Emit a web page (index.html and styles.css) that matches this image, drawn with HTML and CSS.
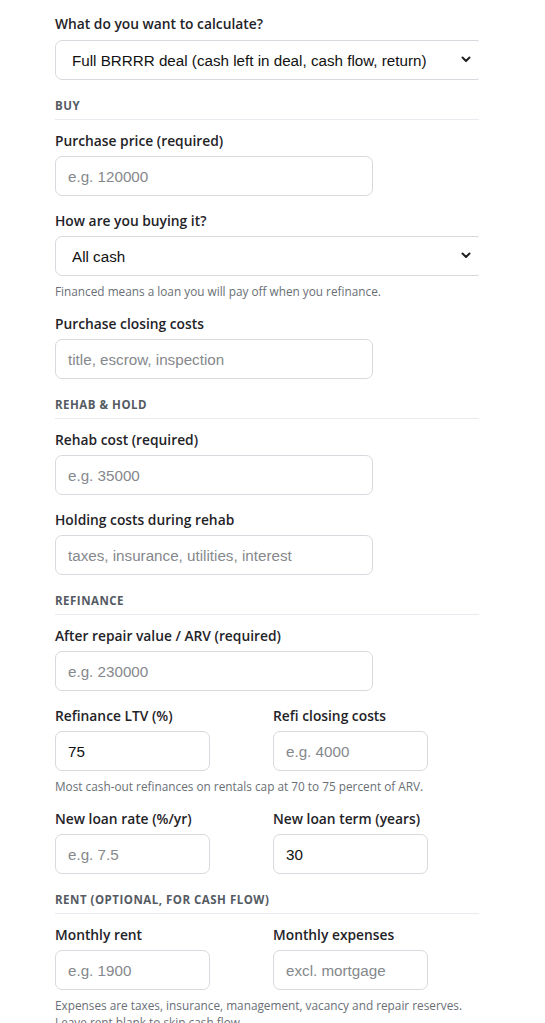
FILE: index.html
```html
<!DOCTYPE html>
<html lang="en">
<head>
<meta charset="utf-8">
<title>BRRRR calculator</title>
<link rel="stylesheet" href="styles.css">
</head>
<body>
<form class="calc">
  <div class="field">
    <label class="label" for="mode">What do you want to calculate?</label>
    <div class="select-wrap">
      <select id="mode" class="select">
        <option>Full BRRRR deal (cash left in deal, cash flow, return)</option>
      </select>
      <svg class="chev" width="10" height="7" viewBox="0 0 10 7"><path d="M1.5 1.5 L5 5 L8.5 1.5" fill="none" stroke="#222" stroke-width="2" stroke-linecap="round" stroke-linejoin="round"/></svg>
    </div>
  </div>

  <div class="section">Buy</div>
  <div class="field">
    <label class="label" for="price">Purchase price (required)</label>
    <input id="price" class="input" type="text" placeholder="e.g. 120000">
  </div>
  <div class="field">
    <label class="label" for="buy">How are you buying it?</label>
    <div class="select-wrap">
      <select id="buy" class="select">
        <option>All cash</option>
      </select>
      <svg class="chev" width="10" height="7" viewBox="0 0 10 7"><path d="M1.5 1.5 L5 5 L8.5 1.5" fill="none" stroke="#222" stroke-width="2" stroke-linecap="round" stroke-linejoin="round"/></svg>
    </div>
    <p class="hint">Financed means a loan you will pay off when you refinance.</p>
  </div>
  <div class="field">
    <label class="label" for="pcc">Purchase closing costs</label>
    <input id="pcc" class="input" type="text" placeholder="title, escrow, inspection">
  </div>

  <div class="section">Rehab &amp; hold</div>
  <div class="field">
    <label class="label" for="rehab">Rehab cost (required)</label>
    <input id="rehab" class="input" type="text" placeholder="e.g. 35000">
  </div>
  <div class="field">
    <label class="label" for="hold">Holding costs during rehab</label>
    <input id="hold" class="input" type="text" placeholder="taxes, insurance, utilities, interest">
  </div>

  <div class="section">Refinance</div>
  <div class="field">
    <label class="label" for="arv">After repair value / ARV (required)</label>
    <input id="arv" class="input" type="text" placeholder="e.g. 230000">
  </div>
  <div class="field">
    <div class="row">
      <div class="col">
        <label class="label" for="ltv">Refinance LTV (%)</label>
        <input id="ltv" class="input small" type="text" value="75">
      </div>
      <div class="col">
        <label class="label" for="rcc">Refi closing costs</label>
        <input id="rcc" class="input small" type="text" placeholder="e.g. 4000">
      </div>
    </div>
    <p class="hint">Most cash-out refinances on rentals cap at 70 to 75 percent of ARV.</p>
  </div>
  <div class="field">
    <div class="row">
      <div class="col">
        <label class="label" for="rate">New loan rate (%/yr)</label>
        <input id="rate" class="input small" type="text" placeholder="e.g. 7.5">
      </div>
      <div class="col">
        <label class="label" for="term">New loan term (years)</label>
        <input id="term" class="input small" type="text" value="30">
      </div>
    </div>
  </div>

  <div class="section">Rent (optional, for cash flow)</div>
  <div class="field">
    <div class="row">
      <div class="col">
        <label class="label" for="rent">Monthly rent</label>
        <input id="rent" class="input small" type="text" placeholder="e.g. 1900">
      </div>
      <div class="col">
        <label class="label" for="exp">Monthly expenses</label>
        <input id="exp" class="input small" type="text" placeholder="excl. mortgage">
      </div>
    </div>
    <p class="hint">Expenses are taxes, insurance, management, vacancy and repair reserves. Leave rent blank to skip cash flow.</p>
  </div>
</form>
</body>
</html>
```

FILE: styles.css
```css
html, body {
  margin: 0;
  padding: 0;
  background: #ffffff;
}

body {
  font-family: "Open Sans", "Liberation Sans", sans-serif;
  color: #1f2328;
}

.calc {
  width: 424px;
  margin: 0 0 0 55px;
  padding-top: 14px;
}

.field {
  display: flex;
  flex-direction: column;
  margin-bottom: 15px;
}

.label {
  display: block;
  font-size: 13.8px;
  font-weight: 600;
  line-height: 20px;
  color: #1f2328;
  margin-bottom: 5px;
}

.field:first-child .label {
  margin-bottom: 6px;
}

.select-wrap {
  position: relative;
  overflow: hidden;
  width: 424px;
  height: 40px;
}

.select {
  appearance: none;
  -webkit-appearance: none;
  box-sizing: border-box;
  width: 428px;
  height: 40px;
  margin: 0;
  padding: 0 30px 0 16px;
  border: 1px solid #d6d9de;
  border-radius: 7px;
  background: #ffffff;
  font-family: "Liberation Sans", Arial, sans-serif;
  font-size: 15.2px;
  color: #111111;
}

.chev {
  position: absolute;
  right: 8px;
  top: 16px;
  pointer-events: none;
}

.input {
  box-sizing: border-box;
  width: 318px;
  height: 40px;
  margin: 0;
  padding: 0 12px;
  border: 1px solid #d6d9de;
  border-radius: 7px;
  background: #ffffff;
  font-family: "Liberation Sans", Arial, sans-serif;
  font-size: 15.2px;
  color: #111111;
  outline: none;
}

.input.small {
  width: 155px;
}

.input::placeholder {
  color: #85888c;
}

.hint {
  margin: 7px 0 -1px;
  font-size: 11.8px;
  line-height: 17px;
  color: #6a6f76;
}

.section {
  margin-top: 19px;
  padding-bottom: 6px;
  border-bottom: 1px solid #e8ebef;
  margin-bottom: 11px;
  font-size: 11.5px;
  line-height: 14px;
  font-weight: 700;
  letter-spacing: 0.5px;
  text-transform: uppercase;
  color: #555b63;
}

.row {
  display: grid;
  grid-template-columns: 1fr 1fr;
  column-gap: 12px;
}

.col {
  display: flex;
  flex-direction: column;
}
```
